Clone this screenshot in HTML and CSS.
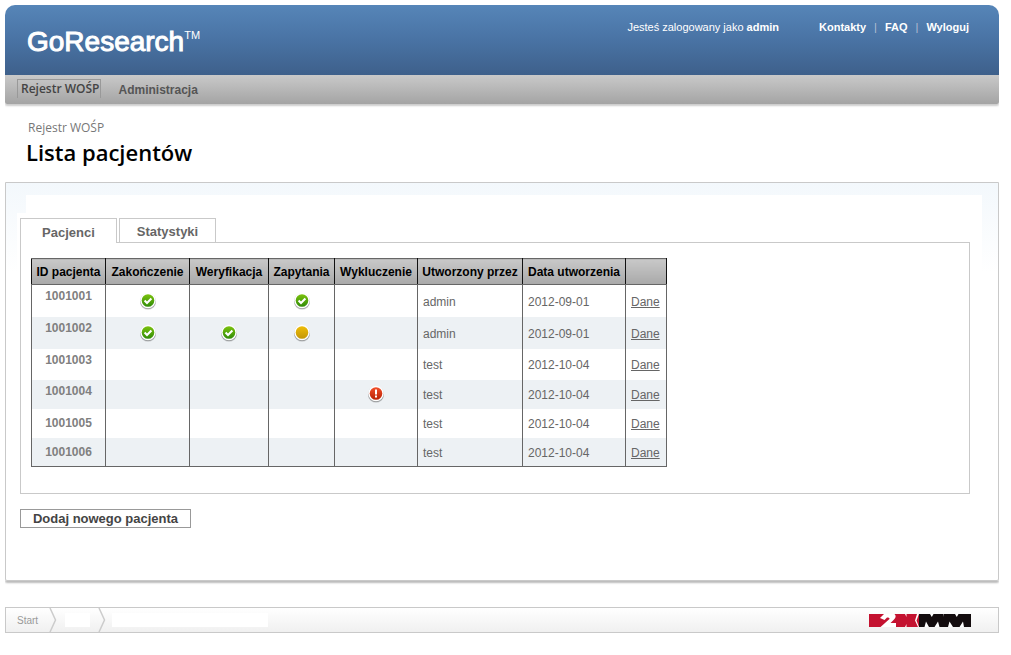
FILE: index.html
```html
<!DOCTYPE html>
<html lang="pl">
<head>
<meta charset="utf-8">
<title>GoResearch – Lista pacjentów</title>
<link rel="stylesheet" href="styles.css">
</head>
<body>
<svg class="defs" width="0" height="0" aria-hidden="true">
  <defs>
    <linearGradient id="green" x1="0" y1="0" x2="0" y2="1"><stop offset="0" stop-color="#7cc30e"/><stop offset="1" stop-color="#2f8a07"/></linearGradient>
    <linearGradient id="amber" x1="0" y1="0" x2="0" y2="1"><stop offset="0" stop-color="#efbd08"/><stop offset="1" stop-color="#c29608"/></linearGradient>
    <linearGradient id="red" x1="0" y1="0" x2="0" y2="1"><stop offset="0" stop-color="#f2502c"/><stop offset="1" stop-color="#b82103"/></linearGradient>
    <symbol id="disc" viewBox="0 0 18 18">
      <circle cx="9" cy="9.8" r="8" fill="#000" opacity=".16"/>
      <circle cx="9" cy="9.2" r="7.9" fill="#000" opacity=".28"/>
      <circle cx="9" cy="8.5" r="7.8" fill="#fff"/>
    </symbol>
    <symbol id="ok" viewBox="0 0 18 18">
      <use href="#disc"/><circle cx="9" cy="8.5" r="6.3" fill="url(#green)"/>
      <path d="M5.600 8.500l2.400 2.400 4.400-4.400" fill="none" stroke="#fff" stroke-width="2.100"/>
    </symbol>
    <symbol id="pending" viewBox="0 0 18 18">
      <use href="#disc"/><circle cx="9" cy="8.5" r="6.3" fill="url(#amber)"/>
    </symbol>
    <symbol id="alert" viewBox="0 0 18 18">
      <use href="#disc"/><circle cx="9" cy="8.5" r="6.3" fill="url(#red)"/>
      <path d="M8 4.500h2v5H8zM8 10.500h2v2H8z" fill="#fff"/>
    </symbol>
  </defs>
</svg>

<header class="header">
  <div class="banner">
    <div class="brand">GoResearch<sup>TM</sup></div>
    <div class="account">
      <span class="user">Jesteś zalogowany jako <b>admin</b></span>
      <nav class="links"><a href="#">Kontakty</a><span>|</span><a href="#">FAQ</a><span>|</span><a href="#">Wyloguj</a></nav>
    </div>
  </div>
  <nav class="menu">
    <a class="menu-item current" href="#">Rejestr WOŚP</a>
    <a class="menu-item" href="#">Administracja</a>
  </nav>
</header>

<div class="heading">
  <div class="section">Rejestr WOŚP</div>
  <h1>Lista pacjentów</h1>
</div>

<main class="panel">
  <div class="panel-top"></div>
  <div class="panel-body">
    <div class="tabs">
      <a class="tab active" href="#">Pacjenci</a>
      <a class="tab" href="#">Statystyki</a>
    </div>
    <div class="tab-content">
      <table class="patients">
        <colgroup><col class="c-id"><col class="c-end"><col class="c-ver"><col class="c-query"><col class="c-excl"><col class="c-author"><col class="c-date"><col class="c-link"></colgroup>
        <thead>
          <tr><th>ID pacjenta</th><th>Zakończenie</th><th>Weryfikacja</th><th>Zapytania</th><th>Wykluczenie</th><th>Utworzony przez</th><th>Data utworzenia</th><th></th></tr>
        </thead>
        <tbody>
          <tr class="tall"><td class="id">1001001</td><td class="state"><svg><use href="#ok"/></svg></td><td></td><td class="state"><svg><use href="#ok"/></svg></td><td></td><td>admin</td><td>2012-09-01</td><td><a href="#">Dane</a></td></tr>
          <tr class="tall"><td class="id">1001002</td><td class="state"><svg><use href="#ok"/></svg></td><td class="state"><svg><use href="#ok"/></svg></td><td class="state"><svg><use href="#pending"/></svg></td><td></td><td>admin</td><td>2012-09-01</td><td><a href="#">Dane</a></td></tr>
          <tr class="medium"><td class="id">1001003</td><td></td><td></td><td></td><td></td><td>test</td><td>2012-10-04</td><td><a href="#">Dane</a></td></tr>
          <tr><td class="id">1001004</td><td></td><td></td><td></td><td class="state"><svg><use href="#alert"/></svg></td><td>test</td><td>2012-10-04</td><td><a href="#">Dane</a></td></tr>
          <tr class="low"><td class="id">1001005</td><td></td><td></td><td></td><td></td><td>test</td><td>2012-10-04</td><td><a href="#">Dane</a></td></tr>
          <tr class="low"><td class="id">1001006</td><td></td><td></td><td></td><td></td><td>test</td><td>2012-10-04</td><td><a href="#">Dane</a></td></tr>
        </tbody>
      </table>
    </div>
    <button class="add" type="button">Dodaj nowego pacjenta</button>
  </div>
</main>

<footer class="footer">
  <a class="crumb" href="#">Start</a>
  <svg class="chevron" viewBox="0 0 8 24"><path d="M1 0l5.500 12L1 24" fill="none" stroke="#ccc" stroke-width="1.500"/></svg>
  <span class="blank short"></span>
  <svg class="chevron" viewBox="0 0 8 24"><path d="M1 0l5.500 12L1 24" fill="none" stroke="#ccc" stroke-width="1.500"/></svg>
  <span class="blank long"></span>
  <svg class="partner" viewBox="0 0 102 13" role="img" aria-label="2KMM">
    <path d="M0 0h50v13H0z" fill="#c41230"/>
    <path d="M50 0h52v13H50z" fill="#130c0e"/>
    <path d="M11 4L15 0H25.500Q28 2.500 25 5.500L21.500 9H27V13H11.500L20.500 5Q21 3 18 3.500L15.500 6zM36 0h1.500v3zM36 13h1.500V10zM48 0L46 6.500 49 13H50L47.500 6.500 50 0zM55.500 13L57 7.500 60 13zM65.500 13L69 7.500 70.500 13zM61 0h3.500l-1.700 3zM79 13L80.500 7.500 84 13zM90.500 13L94 7.500 95 13zM86 0h3.500l-1.700 3zM74.500 0h.5v3z" fill="#fff"/>
  </svg>
</footer>
</body>
</html>
```

FILE: styles.css
```css
* { box-sizing: border-box; }

body {
  margin: 5px 12px 20px 5px;
  background: #fff;
  color: #666;
  font: 12px/14px "Liberation Sans", Arial, sans-serif;
}

.defs { position: absolute; }

.header {
  border-radius: 10px 10px 2px 2px;
  overflow: hidden;
  box-shadow: 0 2px 2px #ccc;
}

.banner {
  display: flex;
  justify-content: space-between;
  align-items: flex-start;
  height: 70px;
  padding: 15px 30px 0 22px;
  background: linear-gradient(#5685b8, #4973a4 50%, #3e608b);
  color: #fff;
}

.brand {
  font-size: 28px;
  line-height: 44px;
  -webkit-text-stroke: 1px #fff;
}

.brand sup {
  font-size: 11px;
  line-height: 12px;
  vertical-align: 12px;
  -webkit-text-stroke: 0;
}

.account { display: flex; gap: 40px; font-size: 11px; }
.links { display: flex; gap: 8px; }
.links a { color: #fff; font-weight: bold; text-decoration: none; }
.links span { color: #b3bfd3; }

.menu {
  display: flex;
  gap: 16px;
  height: 29px;
  padding: 4px 12px 0;
  background: linear-gradient(#c9c9c9, #a4a4a4);
}

.menu-item {
  padding: 4px 2px;
  color: #555;
  font-weight: bold;
  text-decoration: none;
}

.menu-item.current {
  height: 19px;
  padding: 2px 0 0 3px;
  border: 1px solid #999;
  border-bottom: 0;
  color: #444;
  font-family: "Open Sans", sans-serif;
  font-weight: 600;
}

.heading { padding: 16px 21px 14px; font-family: "Open Sans", sans-serif; }
.section { padding-left: 2px; line-height: 16px; color: #777; }
.heading h1 {
  margin: 0;
  font-size: 22px;
  line-height: 32px;
  font-weight: 600;
  color: #000;
}

.panel {
  min-height: 399px;
  padding-top: 12px;
  border: 1px solid #c9c9c9;
  border-radius: 0 0 2px 2px;
  background: linear-gradient(#f3f8fc, #fff 90px);
  box-shadow: 0 2px 2px #bbb;
}

.panel-top { height: 18px; margin: 0 16px 0 20px; background: #fff; }
.panel-body { margin: 0 16px 0 11px; padding: 5px 12px 50px 3px; background: #fff; }

.tabs { display: flex; gap: 2px; }

.tab {
  width: 97px;
  height: 24px;
  padding-top: 6px;
  border: 1px solid #c9c9c9;
  border-bottom: 0;
  background: #fff;
  color: #666;
  font-size: 13px;
  font-weight: bold;
  text-align: center;
  text-decoration: none;
}

.tab.active { height: 25px; margin-bottom: -1px; padding-top: 7px; z-index: 1; }

.tab-content { padding: 15px 10px 26px; border: 1px solid #c9c9c9; }

.patients {
  table-layout: fixed;
  width: 636px;
  border-collapse: collapse;
  border: 1px solid #666;
}

.c-id { width: 74px; }
.c-end { width: 84px; }
.c-ver { width: 79px; }
.c-query { width: 66px; }
.c-excl { width: 83px; }
.c-author { width: 105px; }
.c-date { width: 103px; }
.c-link { width: 41px; }

.patients th {
  height: 26px;
  padding: 0;
  border: 1px solid #111;
  border-top-color: #666;
  border-bottom-color: #666;
  background: linear-gradient(#c8c8c8, #a9a9a9);
  color: #000;
  white-space: nowrap;
}

.patients td {
  height: 29px;
  padding: 2px 5px 0;
  border: solid #666;
  border-width: 0 1px;
}

.patients .tall td { height: 32px; }
.patients .medium td { height: 31px; }
.patients tbody tr:nth-child(even) { background: #edf1f4; }
.patients a { color: #666; }

.patients td.id {
  padding: 4px 0 0;
  color: #808080;
  font-weight: bold;
  text-align: center;
  vertical-align: top;
}

.patients .low td.id { padding-top: 7px; }

.patients td.state { padding: 0; text-align: center; }
.state svg { display: block; width: 18px; height: 18px; margin: 0 auto; }

.add {
  display: block;
  height: 19px;
  min-width: 171px;
  margin-top: 15px;
  padding: 1px 9px 0;
  border: 1px solid #999;
  background: #fff;
  color: #444;
  font: bold 13px/16px "Liberation Sans", Arial, sans-serif;
}

.footer {
  display: flex;
  align-items: center;
  height: 26px;
  margin-top: 26px;
  padding: 0 27px 0 11px;
  border: 1px solid #c9c9c9;
  background: linear-gradient(#fff, #f0f0f0);
}

.crumb { width: 32px; padding-top: 1px; color: #999; font-size: 10px; text-decoration: none; }
.chevron { width: 8px; height: 24px; }
.blank { height: 14px; background: #fff; }
.short { width: 25px; margin: 0 8px 0 8px; }
.long { width: 156px; margin-left: 6px; }
.partner { width: 102px; height: 13px; margin-left: auto; }
```
